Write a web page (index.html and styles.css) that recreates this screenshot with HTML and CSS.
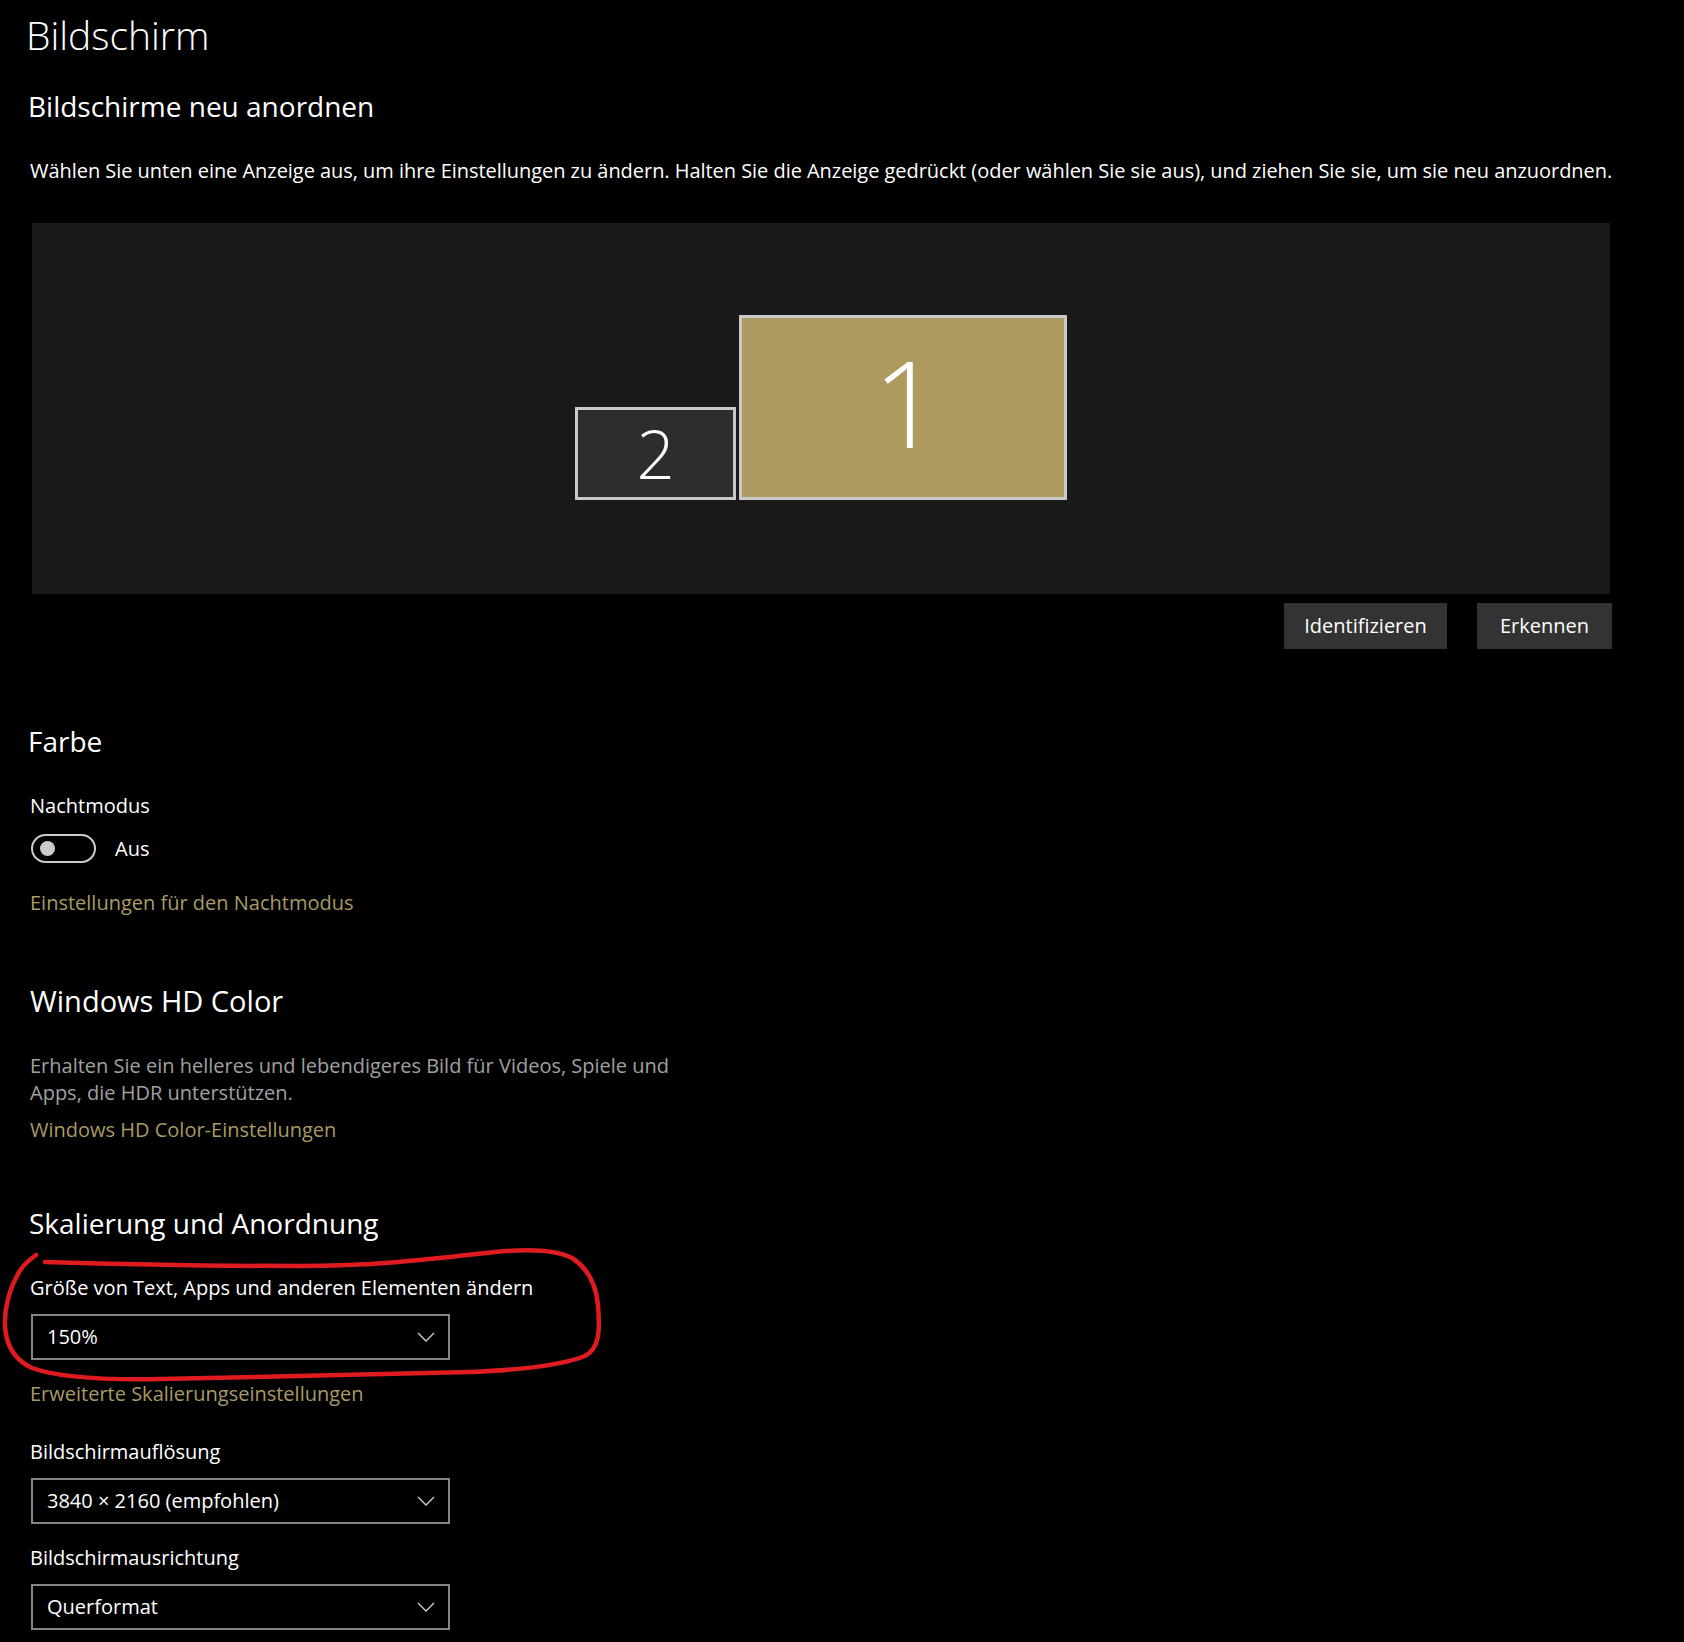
FILE: index.html
```html
<!DOCTYPE html>
<html lang="de">
<head>
<meta charset="utf-8">
<title>Bildschirm</title>
<link rel="stylesheet" href="styles.css">
</head>
<body>
<div class="page">
  <h1 class="title">Bildschirm</h1>
  <h2 class="section-title arrange-title">Bildschirme neu anordnen</h2>
  <p class="intro">Wählen Sie unten eine Anzeige aus, um ihre Einstellungen zu ändern. Halten Sie die Anzeige gedrückt (oder wählen Sie sie aus), und ziehen Sie sie, um sie neu anzuordnen.</p>

  <div class="stage">
    <div class="display-panel">
      <div class="monitor monitor-secondary"><span class="monitor-num small">2</span></div>
      <div class="monitor monitor-primary"><span class="monitor-num">1</span></div>
    </div>
    <div class="panel-actions">
      <button class="btn btn-identify">Identifizieren</button>
      <button class="btn btn-detect">Erkennen</button>
    </div>
  </div>

  <h2 class="section-title color-title">Farbe</h2>
  <div class="label night-label">Nachtmodus</div>
  <div class="toggle-row">
    <span class="toggle"><span class="knob"></span></span>
    <span class="toggle-text">Aus</span>
  </div>
  <a class="link night-link">Einstellungen für den Nachtmodus</a>

  <h2 class="section-title hd-title">Windows HD Color</h2>
  <p class="desc">Erhalten Sie ein helleres und lebendigeres Bild für Videos, Spiele und Apps, die HDR unterstützen.</p>
  <a class="link hd-link">Windows HD Color-Einstellungen</a>

  <h2 class="section-title scale-title">Skalierung und Anordnung</h2>
  <div class="label scale-label">Größe von Text, Apps und anderen Elementen ändern</div>
  <div class="select"><span>150%</span><svg class="chev" width="18" height="10" viewBox="0 0 18 10"><polyline points="1,1 9,9 17,1" fill="none" stroke="#d0d0d0" stroke-width="1.3"/></svg></div>
  <a class="link scale-link">Erweiterte Skalierungseinstellungen</a>

  <div class="label res-label">Bildschirmauflösung</div>
  <div class="select"><span>3840 × 2160 (empfohlen)</span><svg class="chev" width="18" height="10" viewBox="0 0 18 10"><polyline points="1,1 9,9 17,1" fill="none" stroke="#d0d0d0" stroke-width="1.3"/></svg></div>

  <div class="label orient-label">Bildschirmausrichtung</div>
  <div class="select"><span>Querformat</span><svg class="chev" width="18" height="10" viewBox="0 0 18 10"><polyline points="1,1 9,9 17,1" fill="none" stroke="#d0d0d0" stroke-width="1.3"/></svg></div>
</div>

<svg class="annotation" width="1684" height="1642" viewBox="0 0 1684 1642">
  <path d="M36 1255 C 29 1260, 22 1266, 18 1274 C 9 1290, 4 1310, 5 1326 C 6 1345, 15 1360, 32 1368 C 60 1378, 110 1380, 160 1379 C 260 1377, 380 1374, 470 1372 C 520 1370, 560 1366, 585 1356 C 600 1348, 600 1330, 598 1305 C 596 1285, 588 1268, 572 1258 C 555 1249, 525 1249, 495 1252 C 440 1258, 380 1266, 300 1266 C 200 1266, 110 1264, 45 1262" fill="none" stroke="#e01b1f" stroke-width="4.5" stroke-linecap="round" stroke-linejoin="round"/>
</svg>
</body>
</html>
```
FILE: styles.css
```css
* { box-sizing: border-box; }
html, body { margin: 0; padding: 0; background: #000; }
body {
  width: 1684px;
  min-height: 1642px;
  position: relative;
  color: #fff;
  font-family: "Open Sans", "Noto Sans", "Liberation Sans", sans-serif;
  font-size: 20px;
  line-height: 28px;
  overflow: hidden;
}
.page { padding: 7px 0 0 28px; }

.title {
  margin: 0 0 0 -2px;
  font-size: 39px;
  line-height: 56px;
  font-weight: 300;
}
.section-title {
  margin: 0;
  font-size: 28px;
  line-height: 40px;
  font-weight: 400;
}
.arrange-title { margin-top: 23px; }
.intro { margin: 31px 0 0 2px; white-space: nowrap; letter-spacing: -0.04px; }

.stage { width: 1580px; margin: 38px 0 0 4px; }
.display-panel {
  width: 1578px;
  height: 371px;
  background: #191919;
  display: flex;
  justify-content: center;
  align-items: flex-end;
  gap: 3px;
  padding-bottom: 94px;
}
.monitor {
  border: 3px solid #c9c9c9;
  display: flex;
  align-items: center;
  justify-content: center;
  color: #fff;
  font-weight: 300;
}
.monitor-secondary { width: 161px; height: 93px; background: #2d2d2d; }
.monitor-primary { width: 328px; height: 185px; background: #ad9a5e; }
.monitor-num { font-size: 120px; line-height: 1; padding: 0 0 12px 8px; }
.monitor-num.small { font-size: 67px; padding: 0; }

.panel-actions {
  display: flex;
  justify-content: flex-end;
  gap: 30px;
  margin-top: 9px;
}
.btn {
  height: 46px;
  border: 0;
  background: #333;
  color: #fff;
  font: inherit;
  padding: 0;
  text-align: center;
}
.btn-identify { width: 163px; }
.btn-detect { width: 135px; }

.color-title { margin-top: 72px; }
.label { margin-left: 2px; }
.night-label { margin-top: 31px; }
.toggle-row {
  display: flex;
  align-items: center;
  gap: 19px;
  margin: 14px 0 0 3px;
  height: 29px;
}
.toggle {
  width: 65px;
  height: 29px;
  border: 2px solid #cccccc;
  border-radius: 15px;
  display: flex;
  align-items: center;
  padding-left: 7px;
}
.knob { width: 15px; height: 15px; border-radius: 50%; background: #cccccc; }
.toggle-text { line-height: 28px; }

.link {
  display: block;
  color: #a99a66;
  margin-left: 2px;
}
.night-link { margin-top: 26px; }

.hd-title { margin-top: 64px; margin-left: 2px; font-size: 29px; }
.desc {
  margin: 31px 0 0 2px;
  width: 680px;
  color: #a0a0a0;
  line-height: 27px;
}
.hd-link { margin-top: 10px; }

.scale-title { margin-top: 59px; margin-left: 1px; }
.scale-label { margin-top: 31px; }
.select {
  width: 419px;
  height: 46px;
  margin: 12px 0 0 3px;
  border: 2px solid #858585;
  display: flex;
  align-items: center;
  justify-content: space-between;
  padding: 0 13px 0 14px;
  line-height: 42px;
}
.chev { display: block; }
.scale-link { margin-top: 20px; }
.res-label { margin-top: 30px; }
.orient-label { margin-top: 20px; }

.annotation {
  position: absolute;
  left: 0;
  top: 0;
  pointer-events: none;
}
```
